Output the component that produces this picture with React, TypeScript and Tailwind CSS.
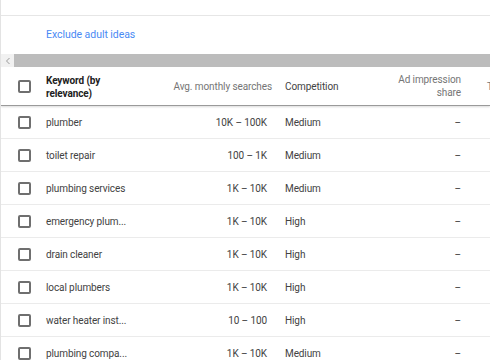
const rows = [
  { keyword: "plumber", searches: "10K – 100K", competition: "Medium" },
  { keyword: "toilet repair", searches: "100 – 1K", competition: "Medium" },
  { keyword: "plumbing services", searches: "1K – 10K", competition: "Medium" },
  { keyword: "emergency plum...", searches: "1K – 10K", competition: "High" },
  { keyword: "drain cleaner", searches: "1K – 10K", competition: "High" },
  { keyword: "local plumbers", searches: "1K – 10K", competition: "High" },
  { keyword: "water heater inst...", searches: "10 – 100", competition: "High" },
  { keyword: "plumbing compa...", searches: "1K – 10K", competition: "Medium" },
];

function Checkbox() {
  return <div className="w-[13px] h-[13px] rounded-[2px] border-2 border-[#6f6f6f] bg-white" />;
}

export default function App() {
  return (
    <div className="w-[490px] h-[360px] overflow-hidden bg-white border-l border-[#e3e3e3] font-['Roboto',sans-serif]">
      {/* top strip */}
      <div className="h-[16px] border-b border-[#e6e6e6]" />

      {/* adult filter */}
      <div className="h-[38px] flex items-center pl-[45px] pb-[1px]">
        <span className="text-[10.5px] tracking-[-0.05px] text-[#4a8af4]">Exclude adult ideas</span>
      </div>

      {/* horizontal scrollbar */}
      <div className="h-[13px] flex">
        <div className="w-[13px] bg-[#f1f1f1] flex items-center justify-center">
          <svg width="6" height="8" viewBox="0 0 6 8">
            <path d="M4.5 1 L1.5 4 L4.5 7" fill="none" stroke="#9a9a9a" strokeWidth="1" />
          </svg>
        </div>
        <div className="flex-1 bg-[#bcbcbc]" />
      </div>

      {/* header */}
      <div className="h-[39px] flex items-center border-b border-[#9a9a9a] shadow-[0_1px_2px_rgba(0,0,0,0.15)] whitespace-nowrap tracking-[-0.1px]">
        <div className="w-[45px] shrink-0 pl-[17px]">
          <Checkbox />
        </div>
        <div className="w-[100px] shrink-0 text-[10px] leading-[13px] font-bold text-[#212121] pt-[1px]">
          Keyword (by
          <br />
          relevance)
        </div>
        <div className="w-[126px] shrink-0 text-right text-[10px] text-[#757575]">Avg. monthly searches</div>
        <div className="w-[112px] shrink-0 pl-[13px] text-[10px] text-[#424242]">Competition</div>
        <div className="w-[77px] shrink-0 text-right text-[10px] leading-[13px] text-[#757575]">
          Ad impression
          <br />
          share
        </div>
        <div className="pl-[26px] text-[10px] text-[#757575]">Top of page bid</div>
      </div>

      {/* rows */}
      {rows.map((r) => (
        <div key={r.keyword} className="h-[33px] flex items-center border-b border-[#ebebeb] whitespace-nowrap text-[10px] tracking-[-0.1px] text-[#424242]">
          <div className="w-[45px] shrink-0 pl-[17px]">
            <Checkbox />
          </div>
          <div className="w-[100px] shrink-0">{r.keyword}</div>
          <div className="w-[126px] shrink-0 text-right pr-[5px]">{r.searches}</div>
          <div className="w-[112px] shrink-0 pl-[13px]">{r.competition}</div>
          <div className="w-[77px] shrink-0 text-right">–</div>
        </div>
      ))}
    </div>
  );
}
